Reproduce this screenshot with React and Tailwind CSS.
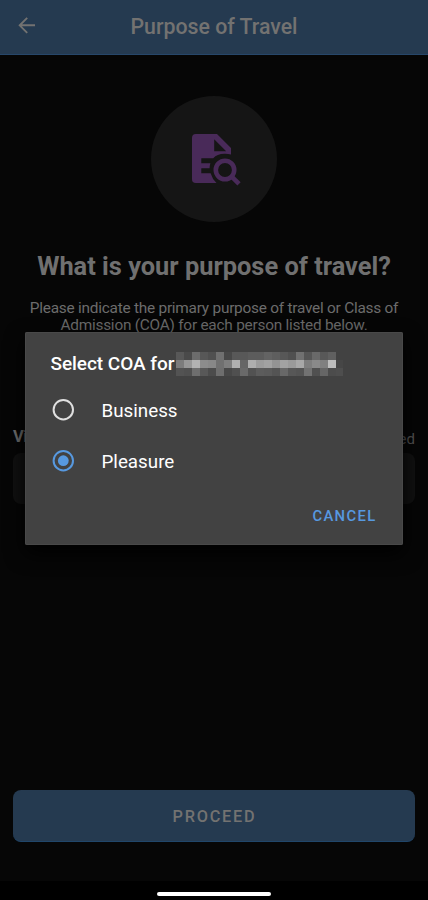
import React, { useState } from 'react';

const options = ['Business', 'Pleasure'];

// Grey levels of the redacted name, one array per row
const redacted = [
    ['#585858', '#4a4a4a', '#6c6c6c', '#575757', '#505050', '#707070', '#484848', '#585858', '#585858', '#5c5c5c', '#5c5c5c', '#636363', '#5e5e5e', '#575757', '#505050', '#717171', '#565656', '#696969', '#585858', '#606060', '#424242'],
    ['#7c7c7c', '#979797', '#b2b2b2', '#8c8c8c', '#888888', '#707070', '#7e7e7e', '#b0b0b0', '#666666', '#aeaeae', '#9c9c9c', '#a2a2a2', '#949494', '#a2a2a2', '#9a9a9a', '#a8a8a8', '#7e7e7e', '#8a8a8a', '#808080', '#bdbdbd', '#464646'],
    ['#535353', '#505050', '#6e6e6e', '#585858', '#4c4c4c', '#6e6e6e', '#484848', '#505050', '#6a6a6a', '#525252', '#5c5c5c', '#5a5a5a', '#545454', '#686868', '#575757', '#545454', '#727272', '#505050', '#666666', '#4c4c4c', '#4e4e4e'],
];

function BackArrow() {
    return (
        <svg width="18" height="18" viewBox="0 0 18 18" fill="none" stroke="#737271" strokeWidth="1.9">
            <path d="M17 8.3H1.5M9.2.8 1.7 8.3l7.5 7.5" />
        </svg>
    );
}

function DocumentSearchIcon() {
    return (
        <svg width="50" height="54" viewBox="0 0 50 54" className="mt-[2px] ml-[3px]">
            <path
                fill="#492a59"
                fillRule="evenodd"
                d="M4 1H26L40 15V21.6A20 20 0 0 0 33.5 20.7Q26 20.8 22.2 25.3H10.3V30.3H19.4Q18.6 32.8 18.6 35.3H10.3V40.3H19.6Q21.2 46 25.5 50H4.8Q1 50 1 46.2V4.8Q1 1 4.8 1ZM23.2 6.2V18.2H35.2Z"
            />
            <circle cx="34" cy="37" r="9.2" fill="none" stroke="#492a59" strokeWidth="4.6" />
            <path d="m39.7 42.7 8.3 8.2" stroke="#492a59" strokeWidth="4.6" />
        </svg>
    );
}

function RadioRow({ label, checked, onSelect }) {
    return (
        <button
            role="radio"
            aria-checked={checked}
            onClick={onSelect}
            className="flex h-[51px] w-full items-center gap-[27.5px] pl-[27px] text-left"
        >
            <svg width="22" height="22" viewBox="0 0 22 22" className="flex-none">
                <circle cx="11.3" cy="10.7" r="9.7" fill="none" stroke={checked ? '#5799e0' : '#e0e0e0'} strokeWidth="2" />
                {checked && <circle cx="11.3" cy="10.7" r="5.4" fill="#5799e0" />}
            </svg>
            <span className="pt-[3px] text-[18.8px] leading-[28px] text-white">{label}</span>
        </button>
    );
}

export default function App() {
    const [selected, setSelected] = useState('Pleasure');
    const [isOpen, setIsOpen] = useState(true);

    return (
        <div className="relative flex h-[900px] w-[428px] flex-col overflow-hidden bg-[#060606] font-['Roboto',sans-serif]">
            {/* Header */}
            <header className="grid h-[55px] flex-none grid-cols-[60px_1fr_60px] items-center border-b border-[#27476a] bg-[#253a50] pb-[3px]">
                <button className="pl-[18px]" aria-label="Back">
                    <BackArrow />
                </button>
                <h1 className="pt-0.5 text-center text-[21.3px] leading-[32px] font-medium text-[#737271]">Purpose of Travel</h1>
            </header>

            <main className="flex flex-1 flex-col items-center px-[13px] pt-[41px]">
                <div className="flex size-[126px] flex-none items-center justify-center rounded-full bg-[#151515]">
                    <DocumentSearchIcon />
                </div>
                <h2 className="mt-[28px] whitespace-nowrap text-[25.4px] leading-[32px] font-bold text-[#707070]">What is your purpose of travel?</h2>
                <p className="mt-[18px] text-center text-[15.4px] leading-[17px] tracking-[-0.24px] whitespace-nowrap text-[#6c6c6c]">
                    Please indicate the primary purpose of travel or Class of
                    <br />
                    Admission (COA) for each person listed below.
                </p>
                <div className="mt-[91px] flex w-full items-center justify-between">
                    <span className="text-[16.5px] leading-[20px] font-bold tracking-[-0.6px] text-[#707070]">Visitor</span>
                    <span className="pt-1 text-[15px] leading-[20px] text-[#555555]">Required</span>
                </div>
                <div className="mt-[4px] h-[51px] w-full rounded-lg bg-[#111111]" />
                <button className="mt-auto mb-[39px] h-[52px] w-full rounded-lg border-b border-[#20466a] bg-[#253a50] pt-1 pl-px text-[16.3px] font-medium tracking-[1.75px] text-[#737271]">
                    PROCEED
                </button>
            </main>

            {/* System gesture bar */}
            <footer className="flex h-[19px] flex-none justify-center bg-black pt-[11px]">
                <div className="h-1 w-[114px] rounded-full bg-white" />
            </footer>

            {/* Dialog */}
            {isOpen && (
                <div role="dialog" className="absolute top-[332px] left-[25px] flex h-[213px] w-[378px] flex-col rounded-xs bg-[#424242] shadow-[inset_0_0_0_1px_#494949,0_8px_20px_#000]">
                    <div className="flex items-center pt-5 pl-[25.5px]">
                        <h3 className="w-[125.5px] whitespace-nowrap text-[19px] leading-[24px] font-medium tracking-[-0.05px] text-white">Select COA for</h3>
                        <div className="grid grid-cols-[repeat(20,8px)_7px] auto-rows-[8px]">
                            {redacted.flat().map((color, i) => (
                                <span key={i} style={{ backgroundColor: color }} />
                            ))}
                        </div>
                    </div>
                    <div role="radiogroup" className="mt-[8px]">
                        {options.map((option) => (
                            <RadioRow key={option} label={option} checked={selected === option} onSelect={() => setSelected(option)} />
                        ))}
                    </div>
                    <button
                        onClick={() => setIsOpen(false)}
                        className="mt-[20px] mr-[26.5px] self-end text-[14.8px] leading-[20px] font-medium tracking-[1.35px] text-[#5799e0]"
                    >
                        CANCEL
                    </button>
                </div>
            )}
        </div>
    );
}
